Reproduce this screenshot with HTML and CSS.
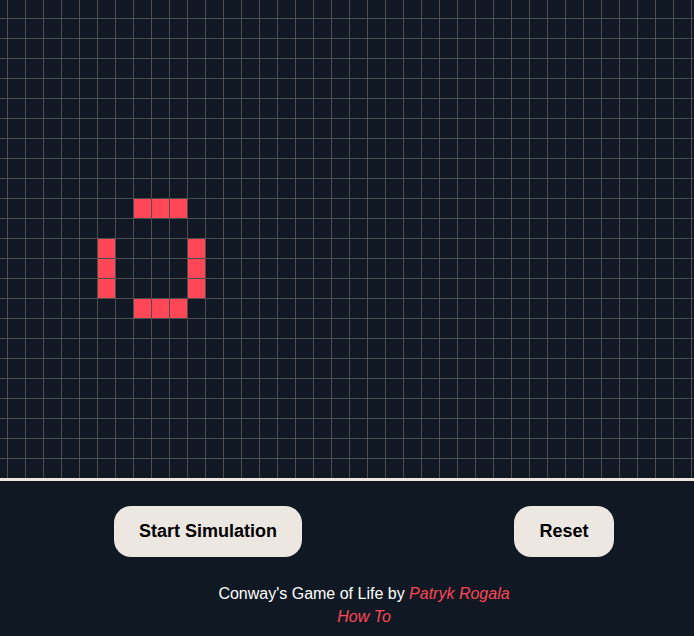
FILE: index.html
```html
<!DOCTYPE html>
<html lang="en">
<head>
<meta charset="utf-8">
<title>Conway's Game of Life</title>
<link rel="stylesheet" href="styles.css">
</head>
<body>
<div class="board">
  <div class="cell c8 r10"></div>
  <div class="cell c9 r10"></div>
  <div class="cell c10 r10"></div>
  <div class="cell c6 r12"></div>
  <div class="cell c6 r13"></div>
  <div class="cell c6 r14"></div>
  <div class="cell c11 r12"></div>
  <div class="cell c11 r13"></div>
  <div class="cell c11 r14"></div>
  <div class="cell c8 r15"></div>
  <div class="cell c9 r15"></div>
  <div class="cell c10 r15"></div>
</div>
<div class="controls">
  <button class="btn btn-start">Start Simulation</button>
  <button class="btn btn-reset">Reset</button>
</div>
<footer class="footer">
  <p class="line">Conway's Game of Life by <a class="link" href="#">Patryk Rogala</a></p>
  <p class="line"><a class="link" href="#">How To</a></p>
</footer>
</body>
</html>
```
FILE: styles.css
```css
html, body {
  margin: 0;
  padding: 0;
  background: #101923;
  font-family: "Liberation Sans", Arial, sans-serif;
  overflow: hidden;
}

.board {
  height: 478px;
  box-sizing: content-box;
  border-bottom: 3px solid #ece6df;
  padding: 19px 0 0 8px;
  box-sizing: border-box;
  height: 481px;
  display: grid;
  grid-template-columns: repeat(38, 17px);
  grid-auto-rows: 19px;
  gap: 1px;
  align-content: start;
  background-color: #101923;
  background-image:
    linear-gradient(to right, #4e4e50 1px, transparent 1px),
    linear-gradient(to bottom, #4e4e50 1px, transparent 1px);
  background-size: 18px 20px, 18px 20px;
  background-position: 7px 0, 0 18px;
}

.cell { background: #ff4757; }
.c6 { grid-column: 6; }
.c8 { grid-column: 8; }
.c9 { grid-column: 9; }
.c10 { grid-column: 10; }
.c11 { grid-column: 11; }
.r10 { grid-row: 10; }
.r12 { grid-row: 12; }
.r13 { grid-row: 13; }
.r14 { grid-row: 14; }
.r15 { grid-row: 15; }

.controls {
  display: flex;
  gap: 212px;
  padding: 25px 0 0 114px;
}

.btn {
  height: 51px;
  border: none;
  border-radius: 17px;
  background: #ece7e1;
  color: #000;
  font-family: "Liberation Sans", Arial, sans-serif;
  font-weight: bold;
  font-size: 18px;
  padding: 0;
  cursor: pointer;
}
.btn-start { width: 188px; }
.btn-reset { width: 100px; }

.footer {
  padding: 25px 0 0 34px;
  text-align: center;
  color: #ffffff;
  font-size: 16px;
}
.line {
  margin: 0;
  line-height: 23px;
}
.link {
  color: #ff4757;
  font-style: italic;
  text-decoration: none;
}
```
